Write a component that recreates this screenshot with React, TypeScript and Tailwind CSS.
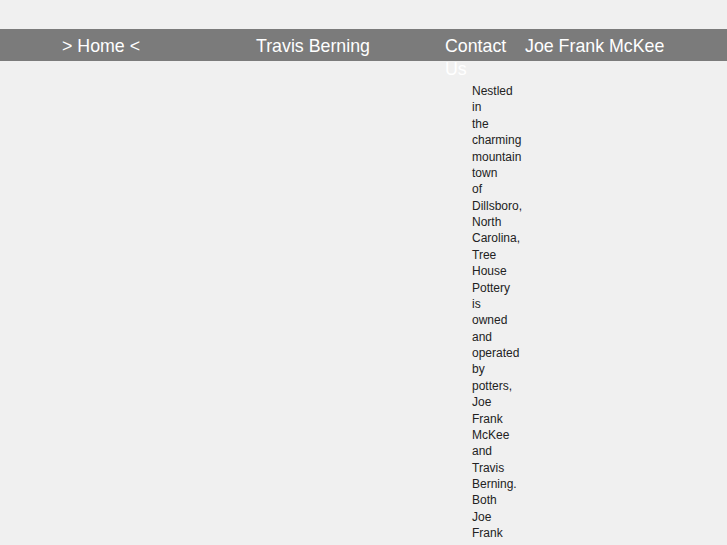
export default function App() {
  const words =
    "Nestled in the charming mountain town of Dillsboro, North Carolina, Tree House Pottery is owned and operated by potters, Joe Frank McKee and Travis Berning. Both Joe Frank and Travis have been making pottery for many years.";
  return (
    <div className="min-h-[545px] bg-[#f0f0f0] pt-[29px] font-['Liberation_Sans',Arial,sans-serif]">
      {/* nav */}
      <div className="h-[32px] bg-[#7b7b7b]">
        <ul className="flex pl-[62px] pt-[6px] text-[17.8px] leading-[23px] text-white">
          <li className="w-[194px] shrink-0">&gt; Home &lt;</li>
          <li className="w-[189px] shrink-0">Travis Berning</li>
          <li className="w-[80px] shrink-0">
            <span className="block w-[66px]">Contact Us</span>
          </li>
          <li className="shrink-0">Joe Frank McKee</li>
        </ul>
      </div>

      {/* intro */}
      <div className="ml-[472px] mt-[22px] w-0 text-[12px] leading-[16.37px] text-[#222222]">
        {words}
      </div>
    </div>
  );
}
